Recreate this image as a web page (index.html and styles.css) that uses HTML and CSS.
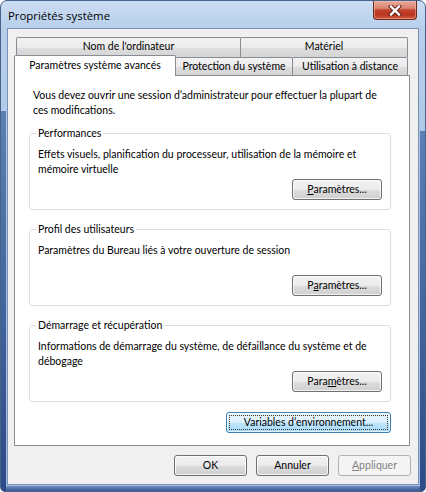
FILE: index.html
```html
<!DOCTYPE html>
<html lang="fr">
<head>
<meta charset="utf-8">
<title>Propriétés système</title>
<link rel="stylesheet" href="styles.css">
</head>
<body>
<div class="window">
  <div class="titlebar">
    <span class="title">Propriétés système</span>
    <button class="close" aria-label="Fermer">
      <svg width="14" height="11" viewBox="0 0 14 11" aria-hidden="true">
        <path d="M3 1.5 L11 9.5 M11 1.5 L3 9.5" stroke="#5a1f16" stroke-width="4.2" stroke-linecap="square" fill="none"/>
        <path d="M3 1.5 L11 9.5 M11 1.5 L3 9.5" stroke="#ffffff" stroke-width="2.4" stroke-linecap="square" fill="none"/>
      </svg>
    </button>
  </div>
  <div class="client">
    <div class="tabs">
      <div class="tabrow back">
        <div class="tab w-nom">Nom de l'ordinateur</div>
        <div class="tab w-mat">Matériel</div>
      </div>
      <div class="tabrow front">
        <div class="tab selected w-av">Paramètres système avancés</div>
        <div class="tab w-prot">Protection du système</div>
        <div class="tab w-util">Utilisation à distance</div>
      </div>
    </div>
    <div class="panel">
      <p class="intro">Vous devez ouvrir une session d’administrateur pour effectuer la plupart de<br>ces modifications.</p>

      <fieldset class="group">
        <legend>Performances</legend>
        <p class="gtext">Effets visuels, planification du processeur, utilisation de la mémoire et<br>mémoire virtuelle</p>
        <div class="gactions"><button class="btn w-param"><u>P</u>aramètres...</button></div>
      </fieldset>

      <fieldset class="group">
        <legend>Profil des utilisateurs</legend>
        <p class="gtext">Paramètres du Bureau liés à votre ouverture de session</p>
        <div class="gactions"><button class="btn w-param">P<u>a</u>ramètres...</button></div>
      </fieldset>

      <fieldset class="group">
        <legend>Démarrage et récupération</legend>
        <p class="gtext">Informations de démarrage du système, de défaillance du système et de<br>débogage</p>
        <div class="gactions"><button class="btn w-param">Para<u>m</u>ètres...</button></div>
      </fieldset>

      <div class="envrow"><button class="btn hot w-env"><span class="focusring">Variables d’environnement...</span></button></div>
    </div>
    <div class="dlgbuttons">
      <button class="btn w-dlg">OK</button>
      <button class="btn w-dlg">Annuler</button>
      <button class="btn w-dlg" disabled><u>A</u>ppliquer</button>
    </div>
  </div>
</div>
</body>
</html>
```
FILE: styles.css
```css
html, body {
  margin: 0;
  padding: 0;
  background: #ffffff;
}

body {
  font-family: Lato, "Open Sans", "Liberation Sans", sans-serif;
  font-size: 10.5px;
  line-height: 15px;
  color: #000000;
}

.window {
  width: 426px;
  height: 492px;
  box-sizing: border-box;
  border: 1px solid #44648c;
  border-radius: 7px 7px 5px 5px;
  padding: 0 6px 6px;
  display: flex;
  flex-direction: column;
  background:
    linear-gradient(#5d7fb3, #2c4a87) 0 110px / 5px 380px no-repeat,
    linear-gradient(#5d7fb3, #2c4a87) 419px 130px / 5px 360px no-repeat,
    linear-gradient(#6f8fc0, #2f4d8a) 0 485px / 424px 6px no-repeat,
    linear-gradient(#cbdcf1 0px, #b7cfeb 28px, #abc5e5 200px, #a3bfe2 100%);
}

.titlebar {
  height: 27px;
  display: flex;
  align-items: flex-start;
  padding-left: 1px;
}

.title {
  margin-top: 7px;
  font-family: "Open Sans", "Noto Sans", sans-serif;
  font-size: 11.4px;
  line-height: 16px;
  color: #000000;
  white-space: nowrap;
}

.close {
  margin-left: auto;
  margin-right: 2px;
  width: 44px;
  height: 19px;
  padding: 0;
  border: 1px solid #6c2a20;
  border-top: 0;
  border-radius: 0 0 4px 4px;
  background: linear-gradient(#e9a99a 0%, #d98670 40%, #c4432c 50%, #b8341f 75%, #d05a3d 100%);
  box-shadow: inset 0 0 0 1px rgba(255, 200, 190, 0.45);
  display: flex;
  align-items: center;
  justify-content: center;
}

.client {
  flex: 1;
  background: #f0f0f0;
  border: 1px solid #7990b2;
  padding: 8px 8px 0 6px;
  display: flex;
  flex-direction: column;
}

/* Tabs */
.tabs {
  display: flex;
  flex-direction: column;
}

.tabrow {
  display: flex;
  align-items: flex-start;
}

.tabrow.back {
  height: 20px;
  margin-left: 2px;
}

.tabrow.front {
  height: 18px;
}

.tab {
  box-sizing: border-box;
  height: 20px;
  border: 1px solid #898c95;
  border-bottom: 0;
  border-radius: 2px 2px 0 0;
  background: linear-gradient(#f3f3f3 0%, #ebebeb 50%, #dedede 51%, #d4d4d4 100%);
  text-align: center;
  line-height: 17px;
  white-space: nowrap;
  margin-right: -1px;
}

.tabrow.front .tab {
  height: 18px;
  line-height: 17px;
}

.tabrow.front .tab.selected {
  height: 21px;
  margin-top: -2px;
  background: #ffffff;
  position: relative;
  z-index: 1;
  line-height: 19px;
}

.w-nom { width: 225px; }
.w-mat { width: 168px; }
.w-av { width: 162px; }
.w-prot { width: 118px; }
.w-util { width: 116px; }

/* Panel */
.panel {
  box-sizing: border-box;
  height: 371px;
  background: #ffffff;
  border: 1px solid #898c95;
  padding: 12px 18px 0 14px;
}

.intro {
  margin: 0;
  padding-left: 4px;
  white-space: nowrap;
}

.group {
  margin: 8px 0 0;
  padding: 0 8px 9px 8px;
  border: 1px solid #d5dfe5;
  border-radius: 3px;
  min-width: 0;
}

.group + .group {
  margin-top: 12px;
}

.group legend {
  padding: 0 2px;
  margin-left: -2px;
  line-height: 15px;
  white-space: nowrap;
}

.gtext {
  margin: 6px 0 0;
  min-height: 30px;
  white-space: nowrap;
}

.gactions {
  display: flex;
  justify-content: flex-end;
  margin-top: 2px;
}

.envrow {
  display: flex;
  justify-content: flex-end;
  margin-top: 10px;
}

/* Buttons */
.btn {
  box-sizing: border-box;
  height: 21px;
  padding: 0;
  font: inherit;
  color: #000000;
  white-space: nowrap;
  border: 1px solid #707070;
  border-radius: 3px;
  background: linear-gradient(#f2f2f2 0%, #ebebeb 50%, #dddddd 51%, #cfcfcf 100%);
  box-shadow: inset 0 0 0 1px rgba(255, 255, 255, 0.75);
  display: inline-flex;
  align-items: center;
  justify-content: center;
  flex: none;
}

.btn u {
  text-decoration: underline;
  text-underline-offset: 1px;
}

.btn.hot {
  border-color: #3c7fb1;
  background: linear-gradient(#eaf6fd 0%, #d9f0fc 50%, #bee6fd 51%, #a7d9f5 100%);
  box-shadow: inset 0 0 0 1px rgba(255, 255, 255, 0.6);
  padding: 2px;
}

.focusring {
  flex: 1;
  align-self: stretch;
  display: flex;
  align-items: center;
  justify-content: center;
  outline: 1px dotted #3a3a3a;
  outline-offset: -1px;
}

.btn:disabled {
  border-color: #adb2b5;
  background: #f4f4f4;
  box-shadow: none;
  color: #838383;
}

.w-param { width: 90px; }
.w-env { width: 165px; }
.w-dlg { width: 73px; }

.dlgbuttons {
  display: flex;
  justify-content: flex-end;
  gap: 9px;
  margin-top: 9px;
  margin-right: -1px;
}
```
